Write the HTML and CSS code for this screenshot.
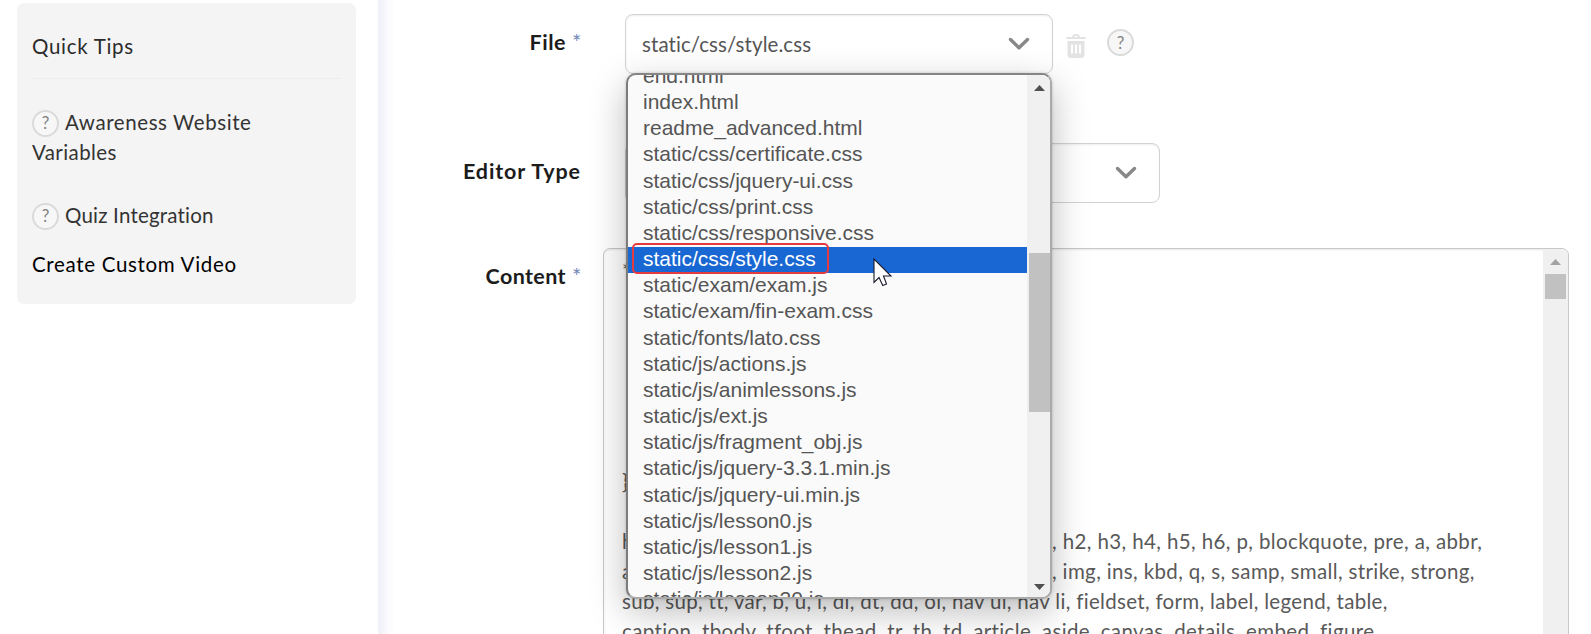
FILE: index.html
```html
<!DOCTYPE html>
<html lang="en">
<head>
<meta charset="utf-8">
<title>Edit File</title>
<link rel="stylesheet" href="styles.css">
</head>
<body>
<div class="page">
  <aside class="sidebar">
    <div class="tips">
      <h2 class="tips-title"><span class="t-quick">Quick Tips</span></h2>
      <p class="tip tip-first"><span class="help">?</span><span class="t-aware">Awareness Website</span><br><span class="t-var">Variables</span></p>
      <p class="tip tip-quiz"><span class="help">?</span><span class="t-quiz">Quiz Integration</span></p>
      <p class="tip tip-link"><span class="t-create">Create Custom Video</span></p>
    </div>
  </aside>
  <main class="main">
    <div class="row row-file">
      <label class="label"><span class="l-file">File</span><span class="req">*</span></label>
      <div class="select select-file">
        <span class="select-text">static/css/style.css</span>
        <svg class="chev" viewBox="0 0 22 14"><path d="M2.5 2.5 11 10.8 19.5 2.5"/></svg>
        <div class="menu">
          <div class="menu-view">
            <ul class="list">
              <li>end.html</li><li>index.html</li><li>readme_advanced.html</li><li>static/css/certificate.css</li><li>static/css/jquery-ui.css</li><li>static/css/print.css</li><li>static/css/responsive.css</li><li class="active">static/css/style.css</li><li>static/exam/exam.js</li><li>static/exam/fin-exam.css</li><li>static/fonts/lato.css</li><li>static/js/actions.js</li><li>static/js/animlessons.js</li><li>static/js/ext.js</li><li>static/js/fragment_obj.js</li><li>static/js/jquery-3.3.1.min.js</li><li>static/js/jquery-ui.min.js</li><li>static/js/lesson0.js</li><li>static/js/lesson1.js</li><li>static/js/lesson2.js</li><li>static/js/lesson20.js</li>
            </ul>
            <div class="menu-bar">
              <svg class="arrow" viewBox="0 0 11 6"><path d="M5.5 0 11 6H0z"/></svg>
              <div class="menu-thumb"></div>
              <svg class="arrow arrow-down" viewBox="0 0 11 6"><path d="M0 0H11L5.5 6z"/></svg>
            </div>
          </div>
        </div>
      </div>
      <svg class="trash" viewBox="0 0 20 25"><path d="M0 4.6Q0 3 1.5 3H6Q6.500 0 9 0H11Q13.500 0 14 3H18.500Q20 3 20 4.600V5H0zM8 3H12Q12 2 11 2H9Q8 2 8 3z"/><path fill-rule="evenodd" d="M1.500 7H18.500V20.500Q18.500 24 15 24H5Q1.500 24 1.500 20.500zM5 10.500V19.500H7V10.500zM9 10.500V19.500H11V10.500zM13 10.500V19.500H15V10.500z"/></svg>
      <span class="help help-file">?</span>
    </div>
    <div class="row row-editor">
      <label class="label"><span class="l-editor">Editor Type</span></label>
      <div class="select select-editor"><svg class="chev" viewBox="0 0 22 14"><path d="M2.5 2.5 11 10.8 19.5 2.5"/></svg></div>
    </div>
    <div class="row row-content">
      <label class="label label-content"><span class="l-content">Content</span><span class="req">*</span></label>
      <div class="editor">
        <div class="code">
          <div class="line">*</div>
          <div class="line gap">}</div>
          <div class="line c1"><span class="lead">html, body, div, span, object, iframe, h1</span>, h2, h3, h4, h5, h6, p, blockquote, pre, a, abbr,</div>
          <div class="line c2"><span class="lead">address, cite, code, del, dfn, em</span>, img, ins, kbd, q, s, samp, small, strike, strong,</div>
          <div class="line c3">sub, sup, tt, var, b, u, i, dl, dt, dd, ol, nav ul, nav li, fieldset, form, label, legend, table,</div>
          <div class="line c4">caption, tbody, tfoot, thead, tr, th, td, article, aside, canvas, details, embed, figure,</div>
        </div>
        <div class="editor-bar"><svg class="arrow" viewBox="0 0 11 6"><path d="M5.5 0 11 6H0z"/></svg><div class="editor-thumb"></div></div>
      </div>
    </div>
  </main>
</div>
<div class="mark"></div>
<svg class="cursor" viewBox="0 0 20 29"><path d="M1 1V24.500L6 19.500 9.800 27.500 13.500 26 10.500 18H18z"/></svg>
</body>
</html>
```
FILE: styles.css
```css
* { box-sizing: border-box; }
body { margin: 0; background: #fff; font-family: Lato, sans-serif; font-size: 20.5px; line-height: 30px; color: #333; overflow: hidden; }
.page { display: flex; width: 1591px; height: 634px; overflow: hidden; }
.sidebar { width: 378px; flex: none; padding: 3px 22px 0 17px; }
.tips { height: 301px; padding: 28px 15px 0; border-radius: 7px; background: #f4f4f4; }
.tips-title { margin: 0; height: 48px; border-bottom: 1px solid #ededed; font-size: inherit; font-weight: 400; color: #2b2b2b; }
.tip { margin: 0; white-space: nowrap; }
.tip-first { padding-top: 28px; }
.tip-quiz { padding-top: 33px; }
.tip-link { padding-top: 19px; color: #000; }
.help { display: inline-flex; align-items: center; justify-content: center; width: 27px; height: 27px; border: 2px solid #dadada; border-radius: 50%; background: #f7f7f7; color: #828282; font-size: 17px; line-height: 20px; vertical-align: middle; margin: -3px 6px 0 0; }
.t-quick { letter-spacing: .7px; }
.t-aware { letter-spacing: .58px; }
.t-var { letter-spacing: .4px; }
.t-quiz { letter-spacing: .2px; }
.t-create { letter-spacing: .68px; }

.main { flex: 1; background: linear-gradient(90deg, #eff0f8 0, #f4f5fb 5px, #fcfcfe 11px, #fff 18px); }
.row { display: flex; }
.row-file { padding-top: 14px; }
.row-editor { padding-top: 69px; }
.row-content { padding-top: 45px; }
.label { width: 203px; flex: none; display: flex; justify-content: flex-end; padding-top: 13px; margin-right: 44px; font-weight: 700; font-size: 21.5px; letter-spacing: .9px; color: #1c1c1c; }
.label-content { margin-right: 22px; }
.l-file { letter-spacing: .5px; }
.l-content { letter-spacing: .4px; }
.req { width: 15px; padding-left: 6px; font-weight: 400; font-size: 22px; line-height: 30px; letter-spacing: 0; color: #7189b5; }
.select { position: relative; display: flex; align-items: center; justify-content: space-between; height: 60px; padding: 0 22px 0 16px; border: 1px solid #d2d2d2; border-radius: 8px; background: #fff; box-shadow: inset 0 1px 2px #eee; }
.select-file { width: 428px; }
.select-editor { width: 535px; justify-content: flex-end; }
.select-text { letter-spacing: .08px; margin-top: -1px; color: #555; }
.chev { width: 22px; height: 14px; fill: none; stroke: #888; stroke-width: 3.4; stroke-linecap: round; stroke-linejoin: round; }
.trash { width: 20px; height: 25px; margin: 20px 0 0 13px; fill: #e3e3e3; }
.help-file { margin: 15px 0 0 21px; }

.menu { position: absolute; z-index: 5; left: 0; top: 58px; width: 426px; height: 526px; border: 2px solid #aaa; border-top-color: #858585; border-left-color: #7c7c7c; border-radius: 10px; background: #fafafa; box-shadow: 0 12px 36px rgba(0,0,0,.27), 0 0 3px rgba(0,0,0,.2); }
.menu-view { display: flex; height: 522px; border-radius: 8px; overflow: hidden; }
.list { flex: 1; margin: -11px 0 0; padding: 0; list-style: none; font-family: "Liberation Sans", Arial, sans-serif; font-size: 21px; line-height: 24px; color: #555; white-space: nowrap; }
.list li { height: 26.16px; padding-left: 15px; }
.list .active { background: #1967d2; color: #fff; }
.menu-bar { width: 23px; background: #f0f0f0; display: flex; flex-direction: column; align-items: center; padding: 10px 0 7px 1px; }
.arrow { width: 11px; height: 6px; fill: #505050; flex: none; }
.menu-thumb { width: 21px; height: 159px; margin-top: 162px; background: #c1c1c1; }
.arrow-down { margin-top: auto; }

.editor { display: flex; width: 966px; height: 400px; border: 1px solid #c8c8c8; border-radius: 7px; background: #fff; box-shadow: inset 0 1px 2px #e8e8e8; overflow: hidden; }
.code { flex: 1; padding: 7px 0 0 18px; color: #595959; white-space: nowrap; }
.line { height: 30px; }
.gap { margin: 180px 0 30px; }
.lead { display: inline-block; width: 430px; overflow: hidden; vertical-align: top; }
.c1 { letter-spacing: .38px; }
.c2 { letter-spacing: .36px; }
.c3 { letter-spacing: .31px; }
.c4 { letter-spacing: .38px; }
.editor-bar { width: 25px; background: #f0f0f0; display: flex; flex-direction: column; align-items: center; padding-top: 10px; }
.editor-bar .arrow { fill: #a3a3a3; }
.editor-thumb { width: 21px; height: 25px; margin-top: 9px; background: #c1c1c1; }

.mark { position: absolute; z-index: 8; left: 632px; top: 243px; width: 197px; height: 31px; border: 2px solid #e53a3e; border-radius: 5px; }
.cursor { position: absolute; z-index: 9; left: 873px; top: 258px; width: 20px; height: 29px; fill: #fff; stroke: #1a1a2e; stroke-width: 1.1; }
```
